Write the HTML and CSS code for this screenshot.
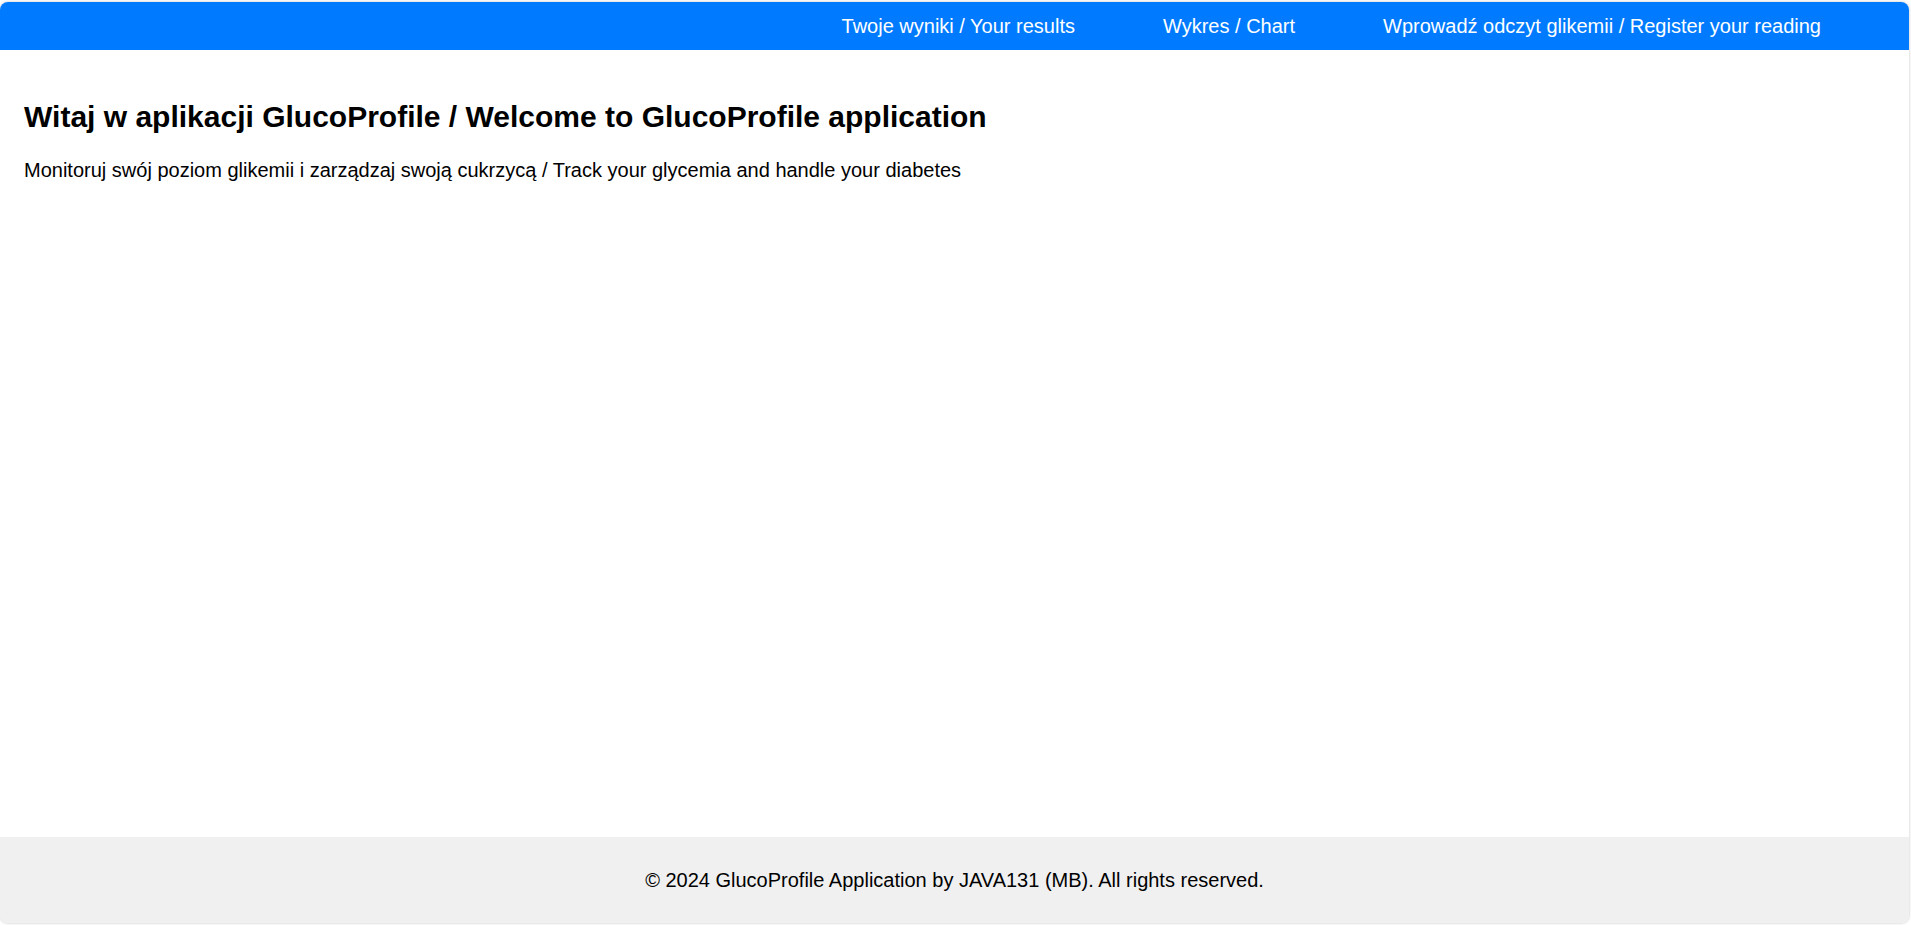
FILE: index.html
```html
<!DOCTYPE html>
<html lang="pl">
<head>
<meta charset="utf-8">
<title>GlucoProfile</title>
<link rel="stylesheet" href="styles.css">
</head>
<body>
<div class="app">
  <header class="topbar">
    <nav class="nav">
      <a href="#" class="nav-link">Twoje wyniki / Your results</a>
      <a href="#" class="nav-link">Wykres / Chart</a>
      <a href="#" class="nav-link">Wprowadź odczyt glikemii / Register your reading</a>
    </nav>
  </header>
  <main class="content">
    <h1 class="title">Witaj w aplikacji GlucoProfile / Welcome to GlucoProfile application</h1>
    <p class="lead">Monitoruj swój poziom glikemii i zarządzaj swoją cukrzycą / Track your glycemia and handle your diabetes</p>
  </main>
  <footer class="footer">
    <p class="copy">© 2024 GlucoProfile Application by JAVA131 (MB). All rights reserved.</p>
  </footer>
</div>
</body>
</html>
```

FILE: styles.css
```css
html, body {
  margin: 0;
  padding: 0;
  background: #ffffff;
  font-family: "Liberation Sans", Arial, sans-serif;
  font-size: 20px;
  color: #000;
}

.app {
  margin: 2px 2px 2px 0;
  height: calc(100vh - 4px);
  box-sizing: border-box;
  display: flex;
  flex-direction: column;
  border-radius: 8px;
  overflow: hidden;
  box-shadow: 0 0 3px rgba(0, 0, 0, 0.25);
  background: #fff;
}

.topbar {
  background: #007bff;
  height: 48px;
  display: flex;
  align-items: center;
  justify-content: flex-end;
  padding-right: 88px;
}

.nav {
  display: flex;
  gap: 88px;
}

.nav-link {
  color: #fff;
  text-decoration: none;
  font-size: 20px;
}

.content {
  flex: 1;
  padding: 50px 24px 0;
}

.title {
  margin: 0 0 25px;
  font-size: 30px;
  font-weight: bold;
}

.lead {
  margin: 0;
  font-size: 20px;
}

.footer {
  background: #f0f0f0;
  height: 86px;
  display: flex;
  align-items: center;
  justify-content: center;
}

.copy {
  margin: 0;
  font-size: 20px;
}
```
